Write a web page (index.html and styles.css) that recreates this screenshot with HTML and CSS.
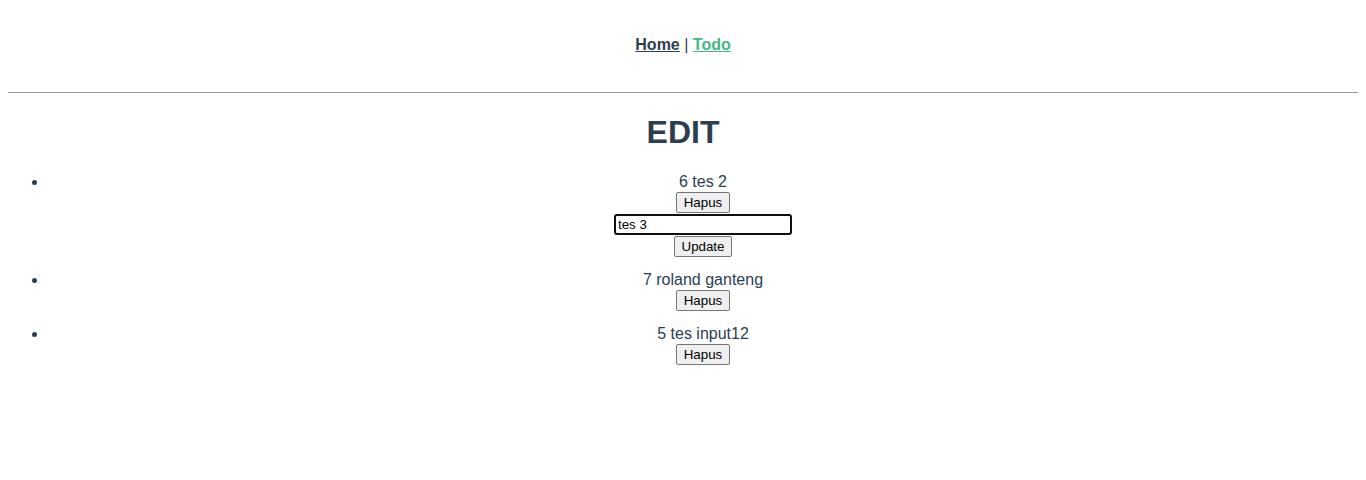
FILE: index.html
```html
<!DOCTYPE html>
<html>
<head>
<meta charset="utf-8">
<link rel="stylesheet" href="styles.css">
</head>
<body>
<div class="app">
  <nav class="nav">
    <a href="#" class="nav-link">Home</a> |
    <a href="#" class="nav-link active">Todo</a>
  </nav>
  <hr class="rule">
  <h1 class="title">EDIT</h1>
  <ul class="list">
    <li class="item">
      <div class="item-text">6 tes 2</div>
      <button class="btn">Hapus</button>
      <input class="edit-input" type="text" value="tes 3" spellcheck="true">
      <button class="btn">Update</button>
    </li>
    <li class="item">
      <div class="item-text">7 roland ganteng</div>
      <button class="btn">Hapus</button>
    </li>
    <li class="item">
      <div class="item-text">5 tes input12</div>
      <button class="btn">Hapus</button>
    </li>
  </ul>
</div>
</body>
</html>
```
FILE: styles.css
```css
body {
  margin: 8px;
  background: #fff;
}
.app {
  font-family: "Liberation Sans", Arial, Helvetica, sans-serif;
  -webkit-font-smoothing: antialiased;
  text-align: center;
  color: #2c3e50;
  font-size: 16px;
}
.nav {
  padding: 28px 30px 30px;
}
.nav-link {
  font-weight: bold;
  color: #2c3e50;
}
.nav-link.active {
  color: #42b983;
}
.rule {
  margin: 8px 0 8px;
  border: 0;
  border-top: 1px solid #999;
  height: 0;
}
.title {
  font-size: 32px;
  margin: 21px 0 22px;
}
.list {
  margin: 0;
  padding-left: 40px;
}
.item {
  margin-bottom: 14px;
}
.item-text {
  line-height: 18px;
}
.btn {
  display: block;
  margin: 1px auto 0;
  font-family: "Liberation Sans", Arial, sans-serif;
  font-size: 13.33px;
  line-height: 15px;
  color: #000;
  background: #efefef;
  border: 1px solid #767676;
  border-radius: 2px;
  padding: 2px 7px;
  height: 21px;
  box-sizing: border-box;
}
.edit-input {
  display: block;
  margin: 1px auto 1px;
  font-family: "Liberation Sans", Arial, sans-serif;
  font-size: 13.33px;
  color: #000;
  width: 178px;
  height: 21px;
  padding: 1px 2px;
  border: 2px solid #101010;
  border-radius: 3px;
  outline: none;
  box-sizing: border-box;
}
```
